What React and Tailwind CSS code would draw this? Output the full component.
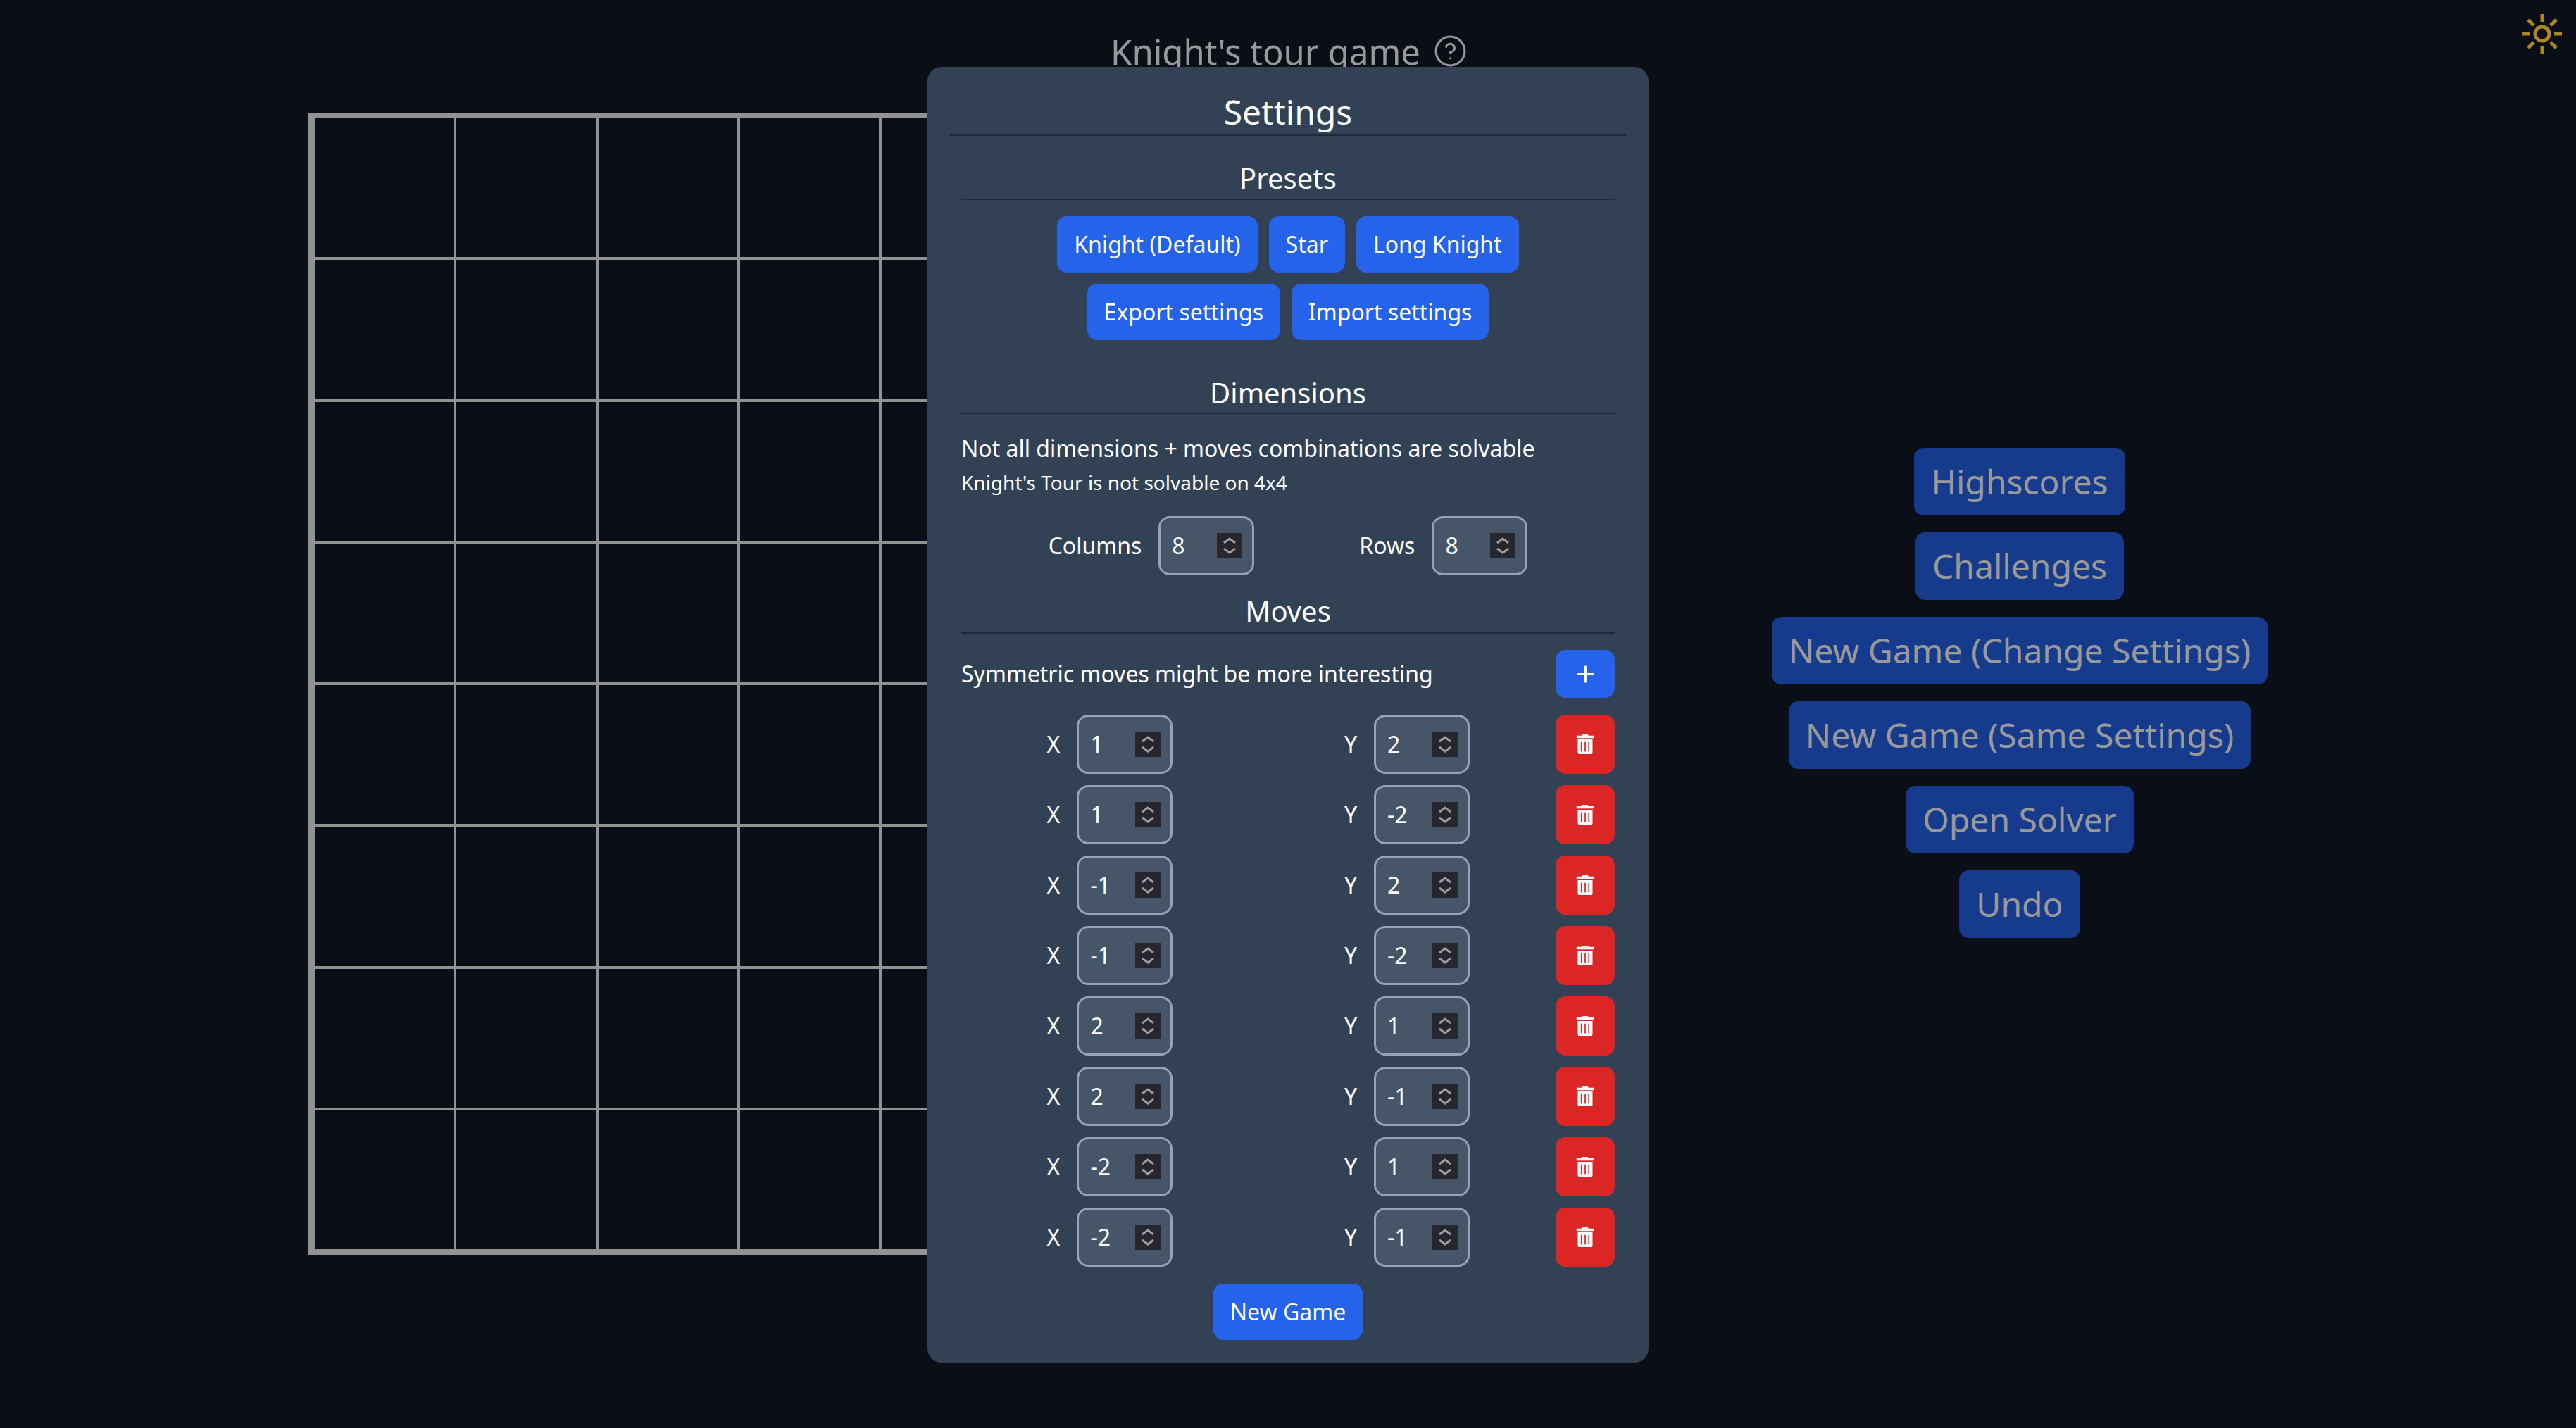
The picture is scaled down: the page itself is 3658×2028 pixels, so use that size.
import { CircleHelp, Plus } from "lucide-react";
import { FaTrashAlt } from "react-icons/fa";

const moves = [
  [1, 2],
  [1, -2],
  [-1, 2],
  [-1, -2],
  [2, 1],
  [2, -1],
  [-2, 1],
  [-2, -1],
];

const sideButtons = [
  "Highscores",
  "Challenges",
  "New Game (Change Settings)",
  "New Game (Same Settings)",
  "Open Solver",
  "Undo",
];

function Btn({ children }) {
  return (
    <button className="h-[80px] px-[24px] rounded-[14px] bg-[#2563eb] text-white text-[32px] leading-none">
      {children}
    </button>
  );
}

function Heading({ children, className }) {
  return (
    <div
      className={`h-[59px] border-b-2 border-[#1e293b] text-center text-[40px] text-white ${className}`}
    >
      {children}
    </div>
  );
}

function NumberBox({ value }) {
  return (
    <div className="w-[136px] h-[84px] pl-[16px] pr-[14px] flex items-center justify-between rounded-[16px] border-[3px] border-[#94a3b8] bg-[#475569] text-[32px] text-white">
      <span>{value}</span>
      <svg
        width="36"
        height="36"
        viewBox="0 0 36 36"
        fill="none"
        stroke="#a09ca0"
        strokeWidth="3"
      >
        <rect width="36" height="36" fill="#26262e" stroke="none" />
        <path d="M10 14 L18 8 L26 14" />
        <path d="M10 22 L18 28 L26 22" />
      </svg>
    </div>
  );
}

function Sun() {
  return (
    <svg
      width="60"
      height="60"
      viewBox="0 0 60 60"
      fill="none"
      stroke="#ad8829"
      strokeWidth="5"
      className="absolute top-[18px] right-[18px] z-20"
    >
      <circle cx="30" cy="30" r="10" />
      <path d="M30 2 V13 M30 47 V58 M2 30 H13 M47 30 H58 M10 10 L18 18 M42 42 L50 50 M10 50 L18 42 M42 18 L50 10" />
    </svg>
  );
}

export default function App() {
  return (
    <div className="relative w-[3658px] h-[2028px] overflow-hidden bg-[#111827] font-['Noto_Sans',sans-serif]">
      <header className="h-[160px] pt-[38px] flex justify-center gap-[24px] text-white">
        <h1 className="ml-[3px] text-[49px] leading-[70px]">Knight's tour game</h1>
        <CircleHelp size={49} strokeWidth={1.5} className="mt-[10px] -ml-[6px]" />
      </header>
      <Sun />

      <main className="flex">
        <div className="ml-[438px] w-[1622px] h-[1622px] shrink-0 grid grid-cols-8 grid-rows-8 border-[6px] border-l-[7px] border-r-[5px] border-[#f3f4f6]">
          {Array.from({ length: 64 }).map((_, i) => (
            <div key={i} className="border-2 border-[#f3f4f6]" />
          ))}
        </div>
        <div className="flex-1 pl-[18px] pt-[476px] flex flex-col items-center gap-[24px]">
          {sideButtons.map((b) => (
            <button
              key={b}
              className="h-[96px] px-[24px] rounded-[14px] bg-[#2563eb] text-white text-[48px] leading-none"
            >
              {b}
            </button>
          ))}
        </div>
      </main>

      {/* modal */}
      <div className="absolute inset-0 z-10 bg-black/40 flex justify-center items-start">
        <div className="mt-[95px] w-[1024px] px-[32px] pt-[32px] pb-[32px] rounded-[20px] bg-[#334155] text-white">
          <div className="h-[66px] border-b-2 border-[#1e293b] text-center text-[48px] leading-[64px]">
            Settings
          </div>

          <div className="px-[16px]">
            <Heading className="mt-[32px] leading-[55px]">Presets</Heading>
            <div className="mt-[23px] flex flex-col gap-[16px]">
              <div className="flex justify-center gap-[16px]">
                <Btn>Knight (Default)</Btn>
                <Btn>Star</Btn>
                <Btn>Long Knight</Btn>
              </div>
              <div className="flex justify-center gap-[16px]">
                <Btn>Export settings</Btn>
                <Btn>Import settings</Btn>
              </div>
            </div>

            <Heading className="mt-[46px] leading-[57px]">Dimensions</Heading>
            <p className="mt-[25px] text-[32px] leading-[47px]">
              Not all dimensions + moves combinations are solvable
            </p>
            <p className="mt-[7px] text-[28px] leading-[37px]">
              Knight's Tour is not solvable on 4x4
            </p>
            <div className="mt-[29px] flex justify-center gap-[149px] text-[32px]">
              <label className="flex items-center gap-[24px]">
                Columns <NumberBox value={8} />
              </label>
              <label className="flex items-center gap-[24px]">
                Rows <NumberBox value={8} />
              </label>
            </div>

            <Heading className="mt-[24px] leading-[53px]">Moves</Heading>
            <div className="mt-[23px] flex items-center justify-between">
              <span className="text-[32px]">
                Symmetric moves might be more interesting
              </span>
              <button className="w-[84px] h-[68px] flex items-center justify-center rounded-[14px] bg-[#2563eb]">
                <Plus size={37} />
              </button>
            </div>

            <div className="mt-[24px] flex flex-col gap-[16px]">
              {moves.map(([x, y], i) => (
                <div key={i} className="flex">
                  <div className="flex-1 grid grid-cols-2 text-[32px]">
                    <label className="flex items-center justify-center gap-[24px]">
                      X <NumberBox value={x} />
                    </label>
                    <label className="flex items-center justify-center gap-[24px]">
                      Y <NumberBox value={y} />
                    </label>
                  </div>
                  <button className="w-[84px] h-[84px] flex items-center justify-center rounded-[14px] bg-[#dc2626]">
                    <FaTrashAlt size={28} />
                  </button>
                </div>
              ))}
            </div>

            <div className="mt-[24px] flex justify-center">
              <Btn>New Game</Btn>
            </div>
          </div>
        </div>
      </div>
    </div>
  );
}
